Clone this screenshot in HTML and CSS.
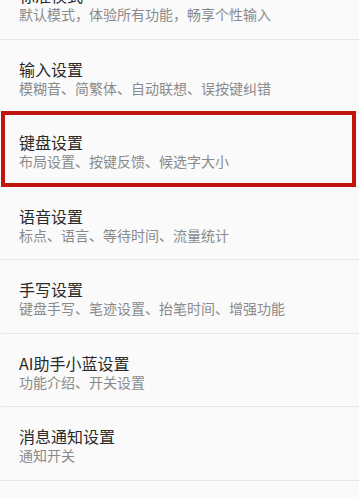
FILE: index.html
```html
<!DOCTYPE html>
<html lang="zh-CN">
<head>
<meta charset="utf-8">
<title>设置</title>
<link rel="stylesheet" href="styles.css">
</head>
<body>
<ul class="settings">
  <li class="row">
    <div class="title">标准模式</div>
    <div class="desc">默认模式，体验所有功能，畅享个性输入</div>
  </li>
  <li class="row">
    <div class="title">输入设置</div>
    <div class="desc">模糊音、简繁体、自动联想、误按键纠错</div>
  </li>
  <li class="row highlighted">
    <div class="title">键盘设置</div>
    <div class="desc">布局设置、按键反馈、候选字大小</div>
  </li>
  <li class="row">
    <div class="title">语音设置</div>
    <div class="desc">标点、语言、等待时间、流量统计</div>
  </li>
  <li class="row">
    <div class="title">手写设置</div>
    <div class="desc">键盘手写、笔迹设置、抬笔时间、增强功能</div>
  </li>
  <li class="row">
    <div class="title">AI助手小蓝设置</div>
    <div class="desc">功能介绍、开关设置</div>
  </li>
  <li class="row">
    <div class="title">消息通知设置</div>
    <div class="desc">通知开关</div>
  </li>
</ul>
</body>
</html>
```
FILE: styles.css
```css
html, body {
  margin: 0;
  padding: 0;
  background: #fafafa;
  overflow: hidden;
}

body {
  font-family: "Noto Sans CJK SC", "Noto Sans", sans-serif;
}

.settings {
  list-style: none;
  margin: -34px 0 0 0;
  padding: 0;
  display: flex;
  flex-direction: column;
}

.row {
  position: relative;
  padding: 19px 18px 15.5px 18px;
  margin-left: 1px;
  border-bottom: 1px solid #e6e6e6;
  display: flex;
  flex-direction: column;
}

.title {
  font-size: 16px;
  line-height: 20px;
  color: #2b2b2b;
}

.desc {
  font-size: 14px;
  line-height: 18px;
  color: #8a8a8a;
}

.highlighted::after {
  content: "";
  position: absolute;
  top: -2px;
  bottom: -1px;
  left: 0;
  right: 3px;
  border: 4.5px solid #c1150f;
  pointer-events: none;
}
```
